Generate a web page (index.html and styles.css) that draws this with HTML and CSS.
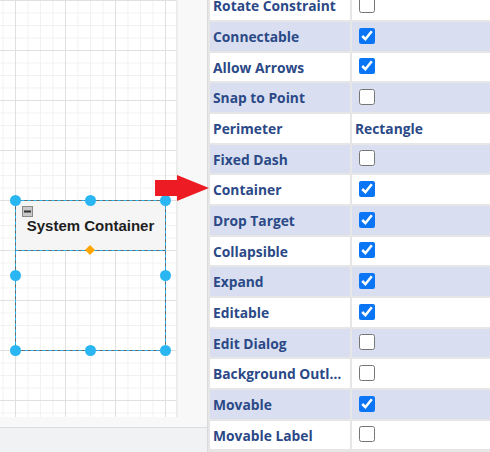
FILE: index.html
```html
<!DOCTYPE html>
<html>
<head>
<meta charset="utf-8">
<link rel="stylesheet" href="styles.css">
</head>
<body>
<div class="app">
  <div class="left">
    <div class="workspace">
      <div class="canvas">
        <svg class="diagram" width="176" height="417" viewBox="0 0 176 417">
          <rect x="15.5" y="200.5" width="150" height="150" fill="none" stroke="#666" stroke-width="1"/>
          <rect x="15.5" y="200.5" width="150" height="50" fill="#f5f5f5" stroke="#666" stroke-width="1"/>
          <rect x="15.5" y="200.5" width="150" height="150" fill="none" stroke="#29b6f2" stroke-width="1" stroke-dasharray="3 3"/>
          <line x1="15.5" y1="250.5" x2="165.5" y2="250.5" stroke="#29b6f2" stroke-width="1" stroke-dasharray="3 3"/>
          <rect x="22.5" y="206.5" width="10" height="10" fill="#c8c8c8" stroke="#8a8a8a" stroke-width="1"/>
          <rect x="24" y="210.5" width="7" height="2" fill="#333"/>
          <polygon points="90,245 95,250 90,255 85,250" fill="#ffa500"/>
          <circle cx="15.5" cy="200.5" r="5.5" fill="#29b6f2"/>
          <circle cx="90.5" cy="200.5" r="5.5" fill="#29b6f2"/>
          <circle cx="165.5" cy="200.5" r="5.5" fill="#29b6f2"/>
          <circle cx="15.5" cy="275.5" r="5.5" fill="#29b6f2"/>
          <circle cx="165.5" cy="275.5" r="5.5" fill="#29b6f2"/>
          <circle cx="15.5" cy="350.5" r="5.5" fill="#29b6f2"/>
          <circle cx="90.5" cy="350.5" r="5.5" fill="#29b6f2"/>
          <circle cx="165.5" cy="350.5" r="5.5" fill="#29b6f2"/>
        </svg>
        <div class="node-label">System Container</div>
      </div>
    </div>
    <div class="footer"></div>
  </div>
  <div class="panel">
    <div class="props">
      <div class="k">Rotate Constraint</div><div class="v"><input type="checkbox"></div>
      <div class="k alt">Connectable</div><div class="v alt"><input type="checkbox" checked></div>
      <div class="k">Allow Arrows</div><div class="v"><input type="checkbox" checked></div>
      <div class="k alt">Snap to Point</div><div class="v alt"><input type="checkbox"></div>
      <div class="k">Perimeter</div><div class="v text">Rectangle</div>
      <div class="k alt">Fixed Dash</div><div class="v alt"><input type="checkbox"></div>
      <div class="k">Container</div><div class="v"><input type="checkbox" checked></div>
      <div class="k alt">Drop Target</div><div class="v alt"><input type="checkbox" checked></div>
      <div class="k">Collapsible</div><div class="v"><input type="checkbox" checked></div>
      <div class="k alt">Expand</div><div class="v alt"><input type="checkbox" checked></div>
      <div class="k">Editable</div><div class="v"><input type="checkbox" checked></div>
      <div class="k alt">Edit Dialog</div><div class="v alt"><input type="checkbox"></div>
      <div class="k">Background Outline</div><div class="v"><input type="checkbox"></div>
      <div class="k alt">Movable</div><div class="v alt"><input type="checkbox" checked></div>
      <div class="k">Movable Label</div><div class="v"><input type="checkbox"></div>
    </div>
  </div>
  <svg class="pointer" width="56" height="28" viewBox="155 174 56 28">
    <polygon points="155,180 177,180 177,175 209,188 177,201 177,196 155,196" fill="#ed1c24"/>
  </svg>
</div>
</body>
</html>
```
FILE: styles.css
```css
html, body {
  margin: 0;
  padding: 0;
  width: 490px;
  height: 452px;
  overflow: hidden;
  background: #fff;
}
.app {
  position: relative;
  display: flex;
  width: 490px;
  height: 452px;
}
.left {
  width: 207px;
  display: flex;
  flex-direction: column;
  border-right: 1px solid #dadada;
}
.workspace {
  height: 428px;
  background: #f8f8f8;
  border-bottom: 1px solid #dcdcdc;
  box-sizing: border-box;
}
.canvas {
  position: relative;
  width: 176px;
  height: 417px;
  border-right: 2px solid #ececec;
  background-color: #fff;
  background-image:
    linear-gradient(to right, #e0e0e0 0, #e0e0e0 1px, transparent 1px),
    linear-gradient(to bottom, #e0e0e0 0, #e0e0e0 1px, transparent 1px),
    linear-gradient(to right, #f1f1f1 0, #f1f1f1 1px, transparent 1px),
    linear-gradient(to bottom, #f1f1f1 0, #f1f1f1 1px, transparent 1px);
  background-size: 50px 50px, 50px 50px, 12.5px 12.5px, 12.5px 12.5px;
  background-position: 15px 0, 0 0, 15px 0, 0 0;
}
.diagram {
  position: absolute;
  left: 0;
  top: 0;
}
.node-label {
  position: absolute;
  left: 15px;
  top: 216px;
  width: 151px;
  text-align: center;
  font: bold 15px "Liberation Sans", Arial, sans-serif;
  color: #1e1e1e;
  line-height: 20px;
}
.footer {
  flex: 1;
  background: #f1f2f4;
}
.panel {
  flex: 1;
  overflow: hidden;
  background: #e6e6e6;
  padding-left: 2px;
}
.props {
  display: grid;
  grid-template-columns: 140px 1fr;
  grid-auto-rows: 28.67px;
  gap: 2px;
  margin-top: -8.67px;
}
.k, .v {
  background: #fff;
  display: flex;
  align-items: center;
  font: bold 13.8px "Open Sans", sans-serif;
  color: #2b4987;
  white-space: nowrap;
  overflow: hidden;
}
.k {
  padding: 0 6px 0 3px;
}
.k.alt, .v.alt {
  background: #d9dff0;
}
.v.text {
  padding-left: 3px;
}
.k {
  display: block;
  line-height: 29.67px;
  text-overflow: ellipsis;
}
.v input {
  width: 16px;
  height: 16px;
  margin: -1px 0 0 7px;
  accent-color: #0b76f5;
}
.pointer {
  position: absolute;
  left: 155px;
  top: 174px;
}
```
